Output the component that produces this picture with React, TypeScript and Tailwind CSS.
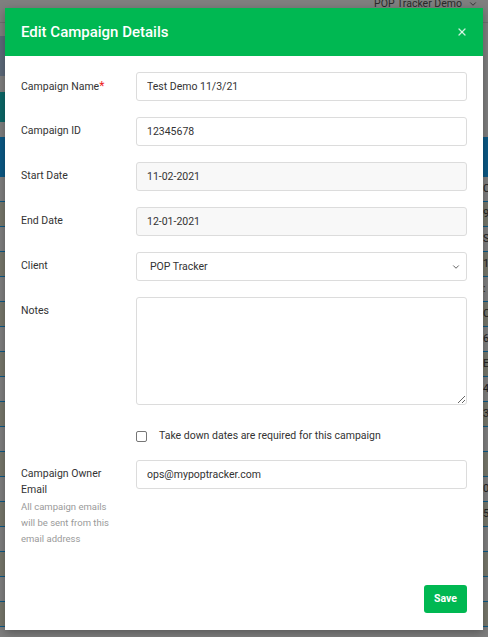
import React from 'react';
import { ChevronDown, X } from 'lucide-react';

// Rows of the campaign table that sits behind the dialog
const tableRows = ['C', '9', 'S', '1', ':', 'C', '6', 'E', '4', '3', '', '', '0', '5', '', '', '', ''];

const Field = ({
  label,
  required,
  children,
}: {
  label: React.ReactNode;
  required?: boolean;
  children: React.ReactNode;
}) => (
  <div className="flex items-start">
    <div className="w-[115px] shrink-0 pt-[6px] text-[10.5px] leading-[16px] text-[#333]">
      {label}
      {required && <span className="text-[#ec1c24] text-[12px]">*</span>}
    </div>
    <div className="flex-1">{children}</div>
  </div>
);

const inputBase =
  'w-full h-[29px] rounded-[3px] border border-[#dcdcdc] px-[10px] text-[10.5px] text-[#333] outline-none';

export default function App() {
  return (
    <div className="relative w-[488px] h-[637px] overflow-hidden bg-[#7f7f7f] font-['Roboto',sans-serif]">
      {/* page behind the backdrop */}
      <div className="h-[23px] border-b border-[#6f6f6f] flex justify-end items-start pr-[10px]">
        <div className="-mt-[4px] flex items-center gap-[6px] text-[10.5px] text-[#2a2a2a]">
          POP Tracker Demo
          <ChevronDown size={10} strokeWidth={2} />
        </div>
      </div>
      <div className="mt-[13px] w-[120px] h-[40px] bg-[#5d6a7a]" />
      <div className="mt-[16px] w-[120px] h-[30px] bg-[#0c6868]" />
      <div className="mt-[15px] h-[40px] bg-[#0b5985]" />
      <div className="flex flex-col">
        {tableRows.map((cell, i) => (
          <div
            key={i}
            className={`h-[25px] border-b border-[#0b5985] grid grid-cols-[110px_209px_103px_60px_1fr] text-[11px] text-[#222] ${
              i % 2 === 1 ? 'bg-[#77776b]' : 'bg-[#7f7f7f]'
            }`}
          >
            <div />
            <div className="border-l border-[#0b5985]" />
            <div className="border-l border-[#0b5985]" />
            <div className="border-l border-[#0b5985]" />
            <div className="pl-[1px] leading-[24px]">{cell}</div>
          </div>
        ))}
      </div>

      {/* dialog */}
      <div className="absolute left-[5px] top-[8px] w-[478px] h-[622px] bg-white shadow-[0_3px_9px_rgba(0,0,0,0.3)] flex flex-col">
        <div className="h-[48px] bg-[#00b852] flex items-center justify-between pl-[16px] pr-[15px]">
          <h2 className="text-[15px] font-medium text-white">Edit Campaign Details</h2>
          <X size={12} strokeWidth={2.5} className="text-white/80" />
        </div>

        <div className="px-[16px] pt-[16px] flex flex-col gap-[16px]">
          <Field label="Campaign Name" required>
            <input className={inputBase} defaultValue="Test Demo 11/3/21" />
          </Field>
          <Field label="Campaign ID">
            <input className={inputBase} defaultValue="12345678" />
          </Field>
          <Field label="Start Date">
            <input className={`${inputBase} bg-[#f8f8f8]`} defaultValue="11-02-2021" disabled />
          </Field>
          <Field label="End Date">
            <input className={`${inputBase} bg-[#f8f8f8]`} defaultValue="12-01-2021" disabled />
          </Field>
          <Field label="Client">
            <div className={`${inputBase} flex items-center justify-between pl-[13px] pr-[5px]`}>
              <span>POP Tracker</span>
              <ChevronDown size={10} strokeWidth={2} className="text-[#444]" />
            </div>
          </Field>
          <Field label="Notes">
            <textarea className="w-full h-[108px] block rounded-[3px] border border-[#dcdcdc] px-[10px] py-[6px] text-[10.5px] text-[#333] outline-none resize" />
          </Field>

          <div className="mt-[8px] pl-[115px] flex items-center gap-[12px] h-[14px]">
            <span className="w-[11px] h-[11px] rounded-[2px] border border-[#767676] bg-white" />
            <span className="text-[10.5px] text-[#333]">Take down dates are required for this campaign</span>
          </div>

          <div className="mt-[1px] flex items-start">
            <div className="w-[115px] shrink-0 pt-[6px]">
              <div className="text-[10.5px] leading-[16px] text-[#333]">
                Campaign Owner
                <br />
                Email
              </div>
              <div className="mt-[1px] text-[9.5px] leading-[16px] text-[#9a9a9a]">
                All campaign emails
                <br />
                will be sent from this
                <br />
                email address
              </div>
            </div>
            <div className="flex-1">
              <input className={inputBase} defaultValue="ops@mypoptracker.com" />
            </div>
          </div>
        </div>

        <div className="mt-auto flex justify-end px-[16px] pb-[17px]">
          <button className="h-[28px] w-[43px] rounded-[3px] bg-[#00b852] text-[10.5px] font-bold text-white">
            Save
          </button>
        </div>
      </div>
    </div>
  );
}
